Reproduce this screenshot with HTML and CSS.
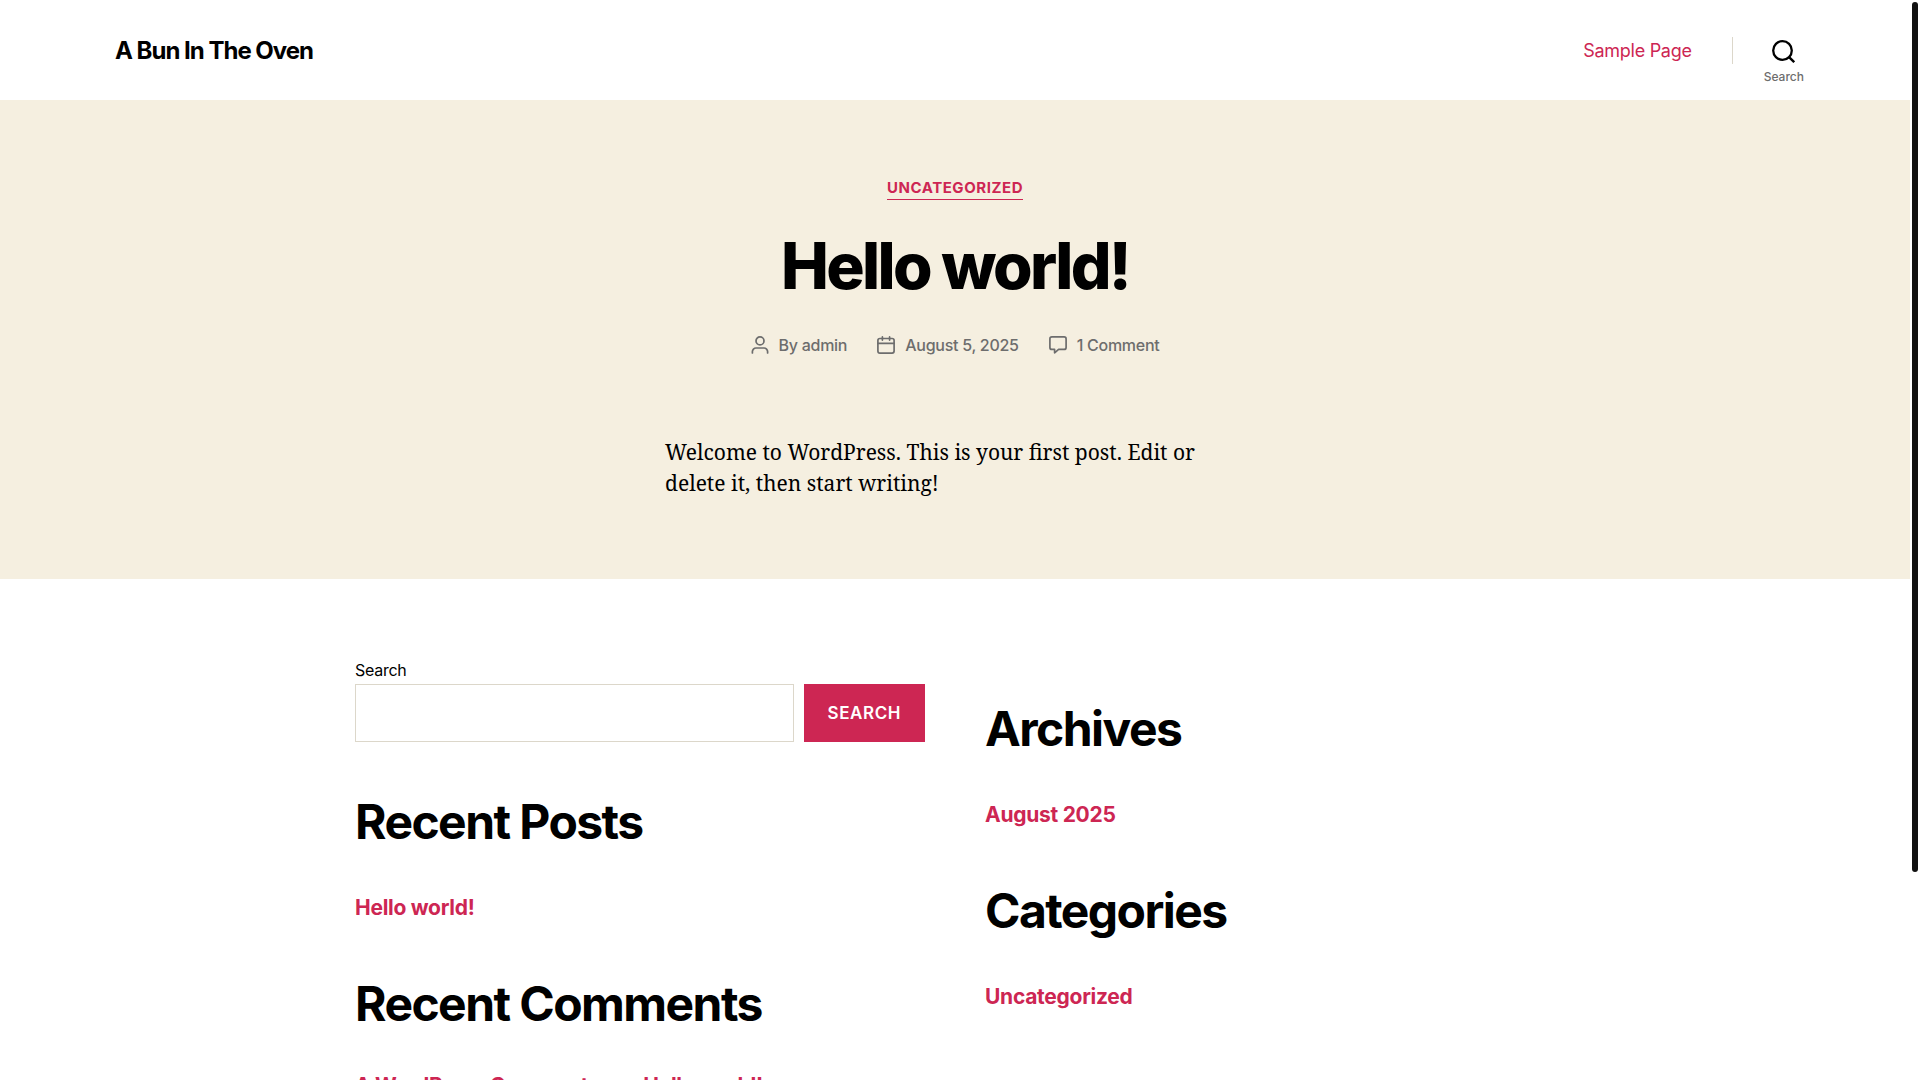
FILE: index.html
```html
<!DOCTYPE html>
<html lang="en-US">
<head>
  <meta charset="UTF-8" />
  <meta name="viewport" content="width=device-width, initial-scale=1.0" />
  <title>A Bun In The Oven</title>
  <link rel="stylesheet" href="styles.css">
</head>
<body>

  <header class="site-header">
    <div class="header-inner">
      <a href="#" class="site-title">A Bun In The Oven</a>

      <div class="header-nav">
        <nav aria-label="Horizontal">
          <a href="#" class="menu-link">Sample Page</a>
        </nav>
        <div class="toggle-wrapper">
          <button type="button" class="search-toggle">
            <svg class="search-icon" viewBox="0 0 23 23" fill="none" stroke="currentColor" aria-hidden="true">
              <circle cx="10.5" cy="10.5" r="9.3" stroke-width="2.3" />
              <path d="M16.6 16.6l5.6 5.6" stroke-width="2.4" />
            </svg>
            <span class="toggle-text">Search</span>
          </button>
        </div>
      </div>
    </div>
  </header>

  <main class="site-content">
    <article class="post">
      <div class="entry-header">
        <div class="entry-categories">
          <a href="#">Uncategorized</a>
        </div>
        <h1 class="entry-title"><a href="#">Hello world!</a></h1>
        <ul class="post-meta">
          <li>
            <svg class="meta-icon" viewBox="0 0 18 18" fill="none" stroke="currentColor" stroke-width="1.7" stroke-linecap="round" stroke-linejoin="round" aria-hidden="true">
              <circle cx="9" cy="4.9" r="4" />
              <path d="M1.4 17v-1.4a3.6 3.6 0 0 1 3.6-3.6h8a3.6 3.6 0 0 1 3.6 3.6V17" />
            </svg>
            <span>By <a href="#">admin</a></span>
          </li>
          <li>
            <svg class="meta-icon" viewBox="0 0 18 18" fill="none" stroke="currentColor" stroke-width="1.7" stroke-linecap="round" stroke-linejoin="round" aria-hidden="true">
              <rect x="0.9" y="2.5" width="16.2" height="14.6" rx="2" />
              <path d="M1 7.4h16M5.4 0.9v3.2M12.6 0.9v3.2" />
            </svg>
            <a href="#">August 5, 2025</a>
          </li>
          <li>
            <svg class="meta-icon" viewBox="0 0 18 18" fill="none" stroke="currentColor" stroke-width="1.7" stroke-linecap="round" stroke-linejoin="round" aria-hidden="true">
              <path d="M2.9 0.9h12.2a2 2 0 0 1 2 2v8.5a2 2 0 0 1-2 2H9.6L5.6 16.8v-3.4H2.9a2 2 0 0 1-2-2V2.9a2 2 0 0 1 2-2z" />
            </svg>
            <a href="#">1 Comment</a>
          </li>
        </ul>
      </div>
      <div class="entry-content">
        <p>Welcome to WordPress. This is your first post. Edit or delete it, then start writing!</p>
      </div>
    </article>
  </main>

  <aside class="footer-widgets">
    <div class="column">
      <form class="search-form" role="search">
        <label for="search-field">Search</label>
        <div class="search-row">
          <input type="search" id="search-field" class="search-field">
          <button type="submit" class="search-submit">Search</button>
        </div>
      </form>
      <section class="widget">
        <h2>Recent Posts</h2>
        <ul>
          <li><a href="#">Hello world!</a></li>
        </ul>
      </section>
      <section class="widget recent-comments">
        <h2>Recent Comments</h2>
        <ol>
          <li><a href="#">A WordPress Commenter</a> on <a href="#">Hello world!</a></li>
        </ol>
      </section>
    </div>

    <div class="column column-two">
      <section class="widget">
        <h2>Archives</h2>
        <ul>
          <li><a href="#">August 2025</a></li>
        </ul>
      </section>
      <section class="widget">
        <h2>Categories</h2>
        <ul>
          <li><a href="#">Uncategorized</a></li>
        </ul>
      </section>
    </div>
  </aside>

  <div class="scroll-thumb" aria-hidden="true"></div>

</body>
</html>
```

FILE: styles.css
```css
/* Reset */
* {
  margin: 0;
  padding: 0;
  box-sizing: border-box;
}

html {
  height: 100%;
  overflow: hidden;
}

body {
  height: 100%;
  padding-right: 10px; /* room for the scroll thumb */
  overflow: hidden;
  background: #fff;
  color: #000;
  font-family: Inter, "Liberation Sans", sans-serif;
  font-size: 18px;
  letter-spacing: -0.015em;
}

a {
  color: #cd2653;
  text-decoration: none;
}

ul, ol {
  list-style: none;
}

button, input {
  font-family: inherit;
}

/* Header */
.header-inner {
  display: flex;
  align-items: center;
  justify-content: space-between;
  width: calc(100% - 80px);
  max-width: 1680px;
  height: 100px;
  margin: 0 auto;
}

.site-title {
  color: #000;
  font-size: 24px;
  font-weight: 700;
  letter-spacing: -0.0416em;
}

.header-nav {
  display: flex;
  align-items: center;
  align-self: stretch;
  margin-right: -20px;
}

.toggle-wrapper {
  display: flex;
  align-items: center;
  align-self: stretch;
  margin-left: 40px;
}

.toggle-wrapper::before {
  content: "";
  width: 1px;
  height: 27px;
  background: #dcd7ca;
}

.search-toggle {
  display: flex;
  flex-direction: column;
  align-items: center;
  align-self: stretch;
  gap: 6px;
  padding: 40px 11px 0 31px;
  border: 0;
  background: none;
  color: #000;
  cursor: pointer;
}

.search-icon {
  width: 23px;
  height: 23px;
}

.toggle-text {
  color: #6d6d6d;
  font-size: 12px;
  font-weight: 500;
  line-height: 15px;
}

/* Post */
.site-content {
  background: #f5efe0;
}

.post {
  padding: 80px 0;
}

.entry-header {
  text-align: center;
}

.entry-categories {
  display: flex;
  justify-content: center;
}

.entry-categories a {
  padding-bottom: 3px;
  border-bottom: 1px solid;
  font-size: 15px;
  font-weight: 700;
  letter-spacing: 0.0367em;
  line-height: 16px;
  text-transform: uppercase;
}

.entry-title {
  margin-top: 31px;
  font-size: 64px;
  font-weight: 800;
  letter-spacing: -0.0416em;
  line-height: 70px;
}

.entry-title a {
  color: #000;
}

.post-meta {
  display: flex;
  justify-content: center;
  gap: 30px;
  margin-top: 32px;
  color: #6d6d6d;
  font-size: 16px;
  font-weight: 500;
  line-height: 24px;
}

.post-meta li {
  display: flex;
  align-items: center;
  gap: 10px;
}

.post-meta a {
  color: inherit;
}

.meta-icon {
  width: 18px;
  height: 18px;
}

.entry-content {
  width: calc(100% - 40px);
  max-width: 580px;
  margin: 80px auto 0;
  font-family: "Noto Serif", "Liberation Serif", serif;
  font-size: 21px;
  letter-spacing: normal;
  line-height: 31px;
}

/* Widgets */
.footer-widgets {
  display: flex;
  gap: 60px;
  width: calc(100% - 80px);
  max-width: 1200px;
  margin: 0 auto;
  padding-top: 80px;
}

.column {
  flex: 1;
}

.column-two {
  padding-top: 40px;
}

.search-form label {
  display: block;
  margin-bottom: 3px;
  font-size: 16px;
  line-height: 22px;
}

.search-row {
  display: flex;
  gap: 10px;
}

.search-field {
  flex: 1;
  min-width: 0;
  height: 58px;
  padding: 0 20px;
  border: 1px solid #dcd7ca;
  background: #fff;
  font-size: 16px;
}

.search-submit {
  padding: 0 24px;
  border: 0;
  background: #cd2653;
  color: #fff;
  font-size: 17px;
  font-weight: 600;
  letter-spacing: 0.0333em;
  text-transform: uppercase;
  cursor: pointer;
}

.search-form + .widget,
.widget + .widget {
  margin-top: 50px;
}

.widget h2 {
  margin-bottom: 40px;
  font-size: 48px;
  font-weight: 700;
  letter-spacing: -0.0325em;
  line-height: 60px;
}

.widget li {
  font-size: 21px;
  font-weight: 700;
  line-height: 32px;
}

.recent-comments li {
  line-height: 24px;
}

/* Scroll thumb on the right edge */
.scroll-thumb {
  position: fixed;
  top: 2px;
  right: 2px;
  width: 6px;
  height: 870px;
  border-radius: 3px;
  background: #111;
}
```
